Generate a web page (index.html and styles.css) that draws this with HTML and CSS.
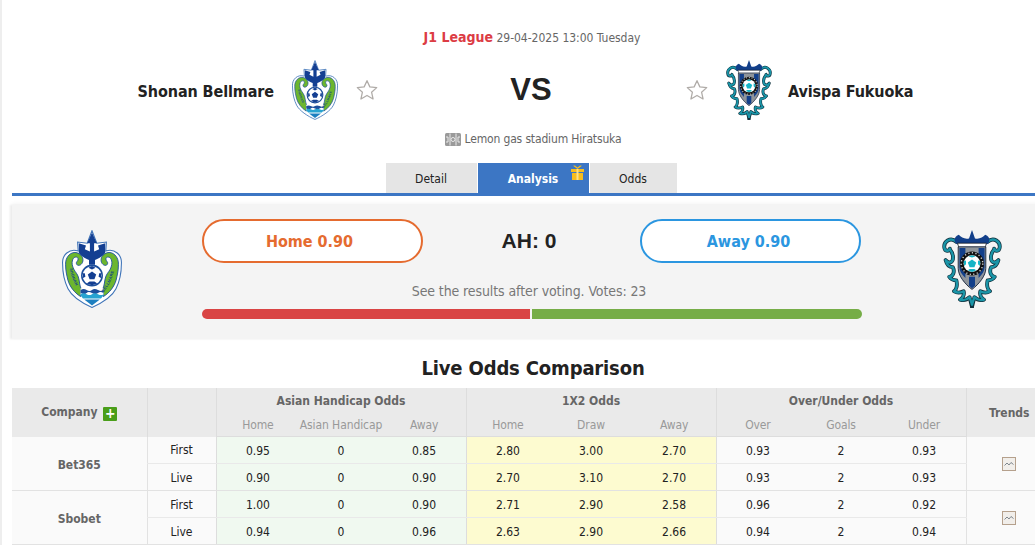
FILE: index.html
```html
<!DOCTYPE html>
<html lang="en">
<head>
<meta charset="utf-8">
<title>Shonan Bellmare vs Avispa Fukuoka</title>
<link rel="stylesheet" href="styles.css">
</head>
<body>
<svg class="defs" aria-hidden="true">
  <symbol id="shonan" viewBox="0 0 100 130">
    <path d="M50 1 58 22 74 20 73 35C88 30 100 42 99 56 99 74 95 88 90 98 84 110 66 122 50 129 34 122 16 110 10 98 5 88 1 74 1 56 0 42 12 30 27 35L26 20 42 22Z" fill="#fff" stroke="#3f74b8" stroke-width="1.800"/>
    <path d="M6 58C5 44 16 35 25 38 35 41 37 51 33 56 30 60 25 60 24 56 23 53 27 52 27 48 26 44 20 44 18 49 15 56 18 64 24 72 30 80 28 90 32 98L31 111C20 104 13 94 10 84 8 76 6 68 6 58Z" fill="#6cb62e" stroke="#1d4f9c" stroke-width="1.500"/>
    <path d="M94 58C95 44 84 35 75 38 65 41 63 51 67 56 70 60 75 60 76 56 77 53 73 52 73 48 74 44 80 44 82 49 85 56 82 64 76 72 70 80 72 90 68 98L69 111C80 104 87 94 90 84 92 76 94 68 94 58Z" fill="#6cb62e" stroke="#1d4f9c" stroke-width="1.500"/>
    <path d="M50 4 58 22H53.500V36L62 32 60 26 72 22V38C68 44 60 48 55 50V58H45V50C40 48 32 44 28 38V22L40 26 38 32 46.500 36V22H42Z" fill="#143f92"/>
    <circle cx="50" cy="76" r="17" fill="#fff" stroke="#1d4f9c" stroke-width="2.600"/>
    <path d="M50 69 57 74 54 82H46L43 74Z" fill="#143f92"/>
    <path d="M50 60 56 63 50 66 44 63ZM65 72 65 80 61 78 62 72ZM35 72 35 80 39 78 38 72ZM41 89 46 86H54L59 89 50 92Z" fill="#143f92"/>
    <path d="M31 97H69V108C63 116 56 122 50 126 44 122 37 116 31 108Z" fill="#fff"/>
    <path d="M31 100Q36 97 41 100T50 100 60 100 69 100V105Q64 102 60 105T50 105 41 105 31 105Z" fill="#1d4f9c"/>
    <path d="M31 107Q36 104 41 107T50 107 60 107 69 107V109L65 114H35L31 109Z" fill="#27a3d1"/>
    <path d="M37 116H63L50 126Z" fill="#1d7fc0"/>
    <path id="shonanL" d="M13 64C15 78 21 92 31 104" fill="none"/>
    <path id="shonanR" d="M69 104C79 92 85 78 87 64" fill="none"/>
    <text class="crest-text"><textPath href="#shonanL">SHONAN</textPath></text>
    <text class="crest-text"><textPath href="#shonanR">BELLMARE</textPath></text>
  </symbol>
  <symbol id="avispa" viewBox="0 0 100 130">
    <path class="scroll-under" d="M24 20C14 10 2 20 4 30 5 36 12 36 13 31M13 32C20 40 20 52 14 54 10 55 8 52 6 50 8 58 12 62 18 62 22 70 18 78 12 78 16 84 20 84 24 84 26 92 24 100 20 102 26 106 32 104 36 102 38 108 34 114 30 116 36 118 42 116 46 112L50 128"/>
    <path class="scroll-under" d="M76 20C86 10 98 20 96 30 95 36 88 36 87 31M87 32C80 40 80 52 86 54 90 55 92 52 94 50 92 58 88 62 82 62 78 70 82 78 88 78 84 84 80 84 76 84 74 92 76 100 80 102 74 106 68 104 64 102 62 108 66 114 70 116 64 118 58 116 54 112L50 128"/>
    <path class="scroll-top" d="M24 20C14 10 2 20 4 30 5 36 12 36 13 31M13 32C20 40 20 52 14 54 10 55 8 52 6 50 8 58 12 62 18 62 22 70 18 78 12 78 16 84 20 84 24 84 26 92 24 100 20 102 26 106 32 104 36 102 38 108 34 114 30 116 36 118 42 116 46 112L50 124"/>
    <path class="scroll-top" d="M76 20C86 10 98 20 96 30 95 36 88 36 87 31M87 32C80 40 80 52 86 54 90 55 92 52 94 50 92 58 88 62 82 62 78 70 82 78 88 78 84 84 80 84 76 84 74 92 76 100 80 102 74 106 68 104 64 102 62 108 66 114 70 116 64 118 58 116 54 112L50 124"/>
    <path d="M50 0 55 14C62 16 68 12 72 8 82 12 80 22 74 24H26C20 22 18 12 28 8 32 12 38 16 45 14Z" fill="#123f8a"/>
    <path d="M26 22H74L72 29H28Z" fill="#fff" stroke="#1a1a1a" stroke-width="1.200"/>
    <path d="M27 28H73V64C73 76 62 90 50 99 38 90 27 76 27 64Z" fill="#8f959b" stroke="#14213a" stroke-width="1.500"/>
    <path d="M29 30H39V80C33 74 29 68 29 62ZM71 30H61V80C67 74 71 68 71 62ZM45 78H55V93L50 97 45 93Z" fill="#123f8a"/>
    <circle cx="50" cy="56" r="20" fill="#111"/>
    <circle cx="50" cy="56" r="18" fill="none" stroke="#d8d8d8" stroke-width="2.400" stroke-dasharray="2 4"/>
    <circle cx="50" cy="56" r="14" fill="#fff"/>
    <path d="M50 49 57 54 54 62H46L43 54Z" fill="#17b4c6"/>
    <path d="M50 42 56 44 50 46 44 44ZM64 52 63 60 60 57 60 51ZM36 52 37 60 40 57 40 51ZM43 67 46 65H54L57 67 50 70Z" fill="#17b4c6"/>
  </symbol>
  <symbol id="star" viewBox="0 0 24 24">
    <path d="M12 1.800 15.100 8.600 22.600 9.400 17 14.400 18.600 21.800 12 18 5.400 21.800 7 14.400 1.400 9.400 8.900 8.600Z" fill="#fff" stroke="#b0aca8" stroke-width="1.400" stroke-linejoin="round"/>
  </symbol>
  <symbol id="trend" viewBox="0 0 14 14">
    <rect x=".5" y=".5" width="13" height="13" fill="#f1eeea" stroke="#b5a08c"/>
    <path d="M2.500 8.500 5 6 7 8 9 5.500 11.500 7.500" fill="none" stroke="#7f878e"/>
  </symbol>
</svg>

<div class="page">
  <header class="match">
    <div class="meta"><span class="league">J1 League</span> <span class="kick">29-04-2025 13:00 Tuesday</span></div>
    <div class="teams">
      <div class="side side-home">
        <span class="team">Shonan Bellmare</span>
        <svg class="crest-small"><use href="#shonan"/></svg>
        <svg class="fav"><use href="#star"/></svg>
      </div>
      <div class="vs">VS</div>
      <div class="side side-away">
        <svg class="fav"><use href="#star"/></svg>
        <svg class="crest-small"><use href="#avispa"/></svg>
        <span class="team">Avispa Fukuoka</span>
      </div>
    </div>
    <div class="venue">
      <svg class="venue-icon" viewBox="0 0 16 13"><rect width="16" height="13" rx="1.500" fill="#9a9a9a"/><path d="M5 .5V12.500M11 .5V12.500M1 4H3V9H1M15 4H13V9H15" fill="none" stroke="#e9e9e9"/><circle cx="8" cy="6.500" r="2" fill="none" stroke="#e9e9e9"/></svg>
      <span>Lemon gas stadium Hiratsuka</span>
    </div>
    <nav class="tabs">
      <a class="tab tab-detail">Detail</a>
      <a class="tab tab-active">Analysis
        <svg class="gift" viewBox="0 0 15 15"><path d="M1 4H14V7H1ZM2 8H13V15H2Z" fill="#f7bd1d"/><path d="M6.500 4V15H8.500V4Z" fill="#fbe08a"/><path d="M7.500 4 3 .8 5 .4 7.500 2.500 10 .4 12 .8Z" fill="#f7bd1d"/></svg>
      </a>
      <a class="tab tab-odds">Odds</a>
    </nav>
  </header>

  <section class="vote">
    <svg class="crest-big"><use href="#shonan"/></svg>
    <div class="vote-main">
      <div class="vote-row">
        <button class="pick pick-home">Home 0.90</button>
        <div class="ah">AH: 0</div>
        <button class="pick pick-away">Away 0.90</button>
      </div>
      <p class="vote-note">See the results after voting. Votes: 23</p>
      <div class="bar"><span class="bar-red"></span><span class="bar-green"></span></div>
    </div>
    <svg class="crest-big"><use href="#avispa"/></svg>
  </section>

  <h2 class="title">Live Odds Comparison</h2>

  <table class="odds">
    <colgroup>
      <col class="c-company"><col class="c-stage">
      <col class="c-odd"><col class="c-odd"><col class="c-odd">
      <col class="c-odd"><col class="c-odd"><col class="c-odd">
      <col class="c-odd"><col class="c-odd"><col class="c-odd">
      <col class="c-trend">
    </colgroup>
    <thead>
      <tr class="head-top">
        <th class="head-span" rowspan="2">Company <span class="plus">+</span></th>
        <th rowspan="2"></th>
        <th colspan="3">Asian Handicap Odds</th>
        <th colspan="3">1X2 Odds</th>
        <th colspan="3">Over/Under Odds</th>
        <th class="head-span" rowspan="2">Trends</th>
      </tr>
      <tr class="head-sub">
        <td class="gl">Home</td><td>Asian Handicap</td><td>Away</td>
        <td class="gl">Home</td><td>Draw</td><td>Away</td>
        <td class="gl">Over</td><td>Goals</td><td>Under</td>
      </tr>
    </thead>
    <tbody>
      <tr class="first">
        <td class="company" rowspan="2">Bet365</td><td class="stage">First</td>
        <td class="ah-cell gl">0.95</td><td class="ah-cell">0</td><td class="ah-cell">0.85</td>
        <td class="x-cell gl">2.80</td><td class="x-cell">3.00</td><td class="x-cell">2.70</td>
        <td class="ou gl">0.93</td><td class="ou">2</td><td class="ou">0.93</td>
        <td class="trend" rowspan="2"><svg class="trend-icon"><use href="#trend"/></svg></td>
      </tr>
      <tr class="last">
        <td class="stage">Live</td>
        <td class="ah-cell gl">0.90</td><td class="ah-cell">0</td><td class="ah-cell">0.90</td>
        <td class="x-cell gl">2.70</td><td class="x-cell">3.10</td><td class="x-cell">2.70</td>
        <td class="ou gl">0.93</td><td class="ou">2</td><td class="ou">0.93</td>
      </tr>
      <tr class="first">
        <td class="company" rowspan="2">Sbobet</td><td class="stage">First</td>
        <td class="ah-cell gl">1.00</td><td class="ah-cell">0</td><td class="ah-cell">0.90</td>
        <td class="x-cell gl">2.71</td><td class="x-cell">2.90</td><td class="x-cell">2.58</td>
        <td class="ou gl">0.96</td><td class="ou">2</td><td class="ou">0.92</td>
        <td class="trend" rowspan="2"><svg class="trend-icon"><use href="#trend"/></svg></td>
      </tr>
      <tr class="last">
        <td class="stage">Live</td>
        <td class="ah-cell gl">0.94</td><td class="ah-cell">0</td><td class="ah-cell">0.96</td>
        <td class="x-cell gl">2.63</td><td class="x-cell">2.90</td><td class="x-cell">2.66</td>
        <td class="ou gl">0.94</td><td class="ou">2</td><td class="ou">0.94</td>
      </tr>
    </tbody>
  </table>
</div>
</body>
</html>
```
FILE: styles.css
```css
html, body {
  margin: 0;
  height: 545px;
  overflow: hidden;
  background: #fff;
}
body {
  border-left: 2px solid #eee;
  font-family: "DejaVu Sans", "Noto Sans", sans-serif;
  font-stretch: condensed;
  font-size: 12px;
  color: #222;
}
.defs { display: none; }
.crest-text {
  font: bold 6.500px "Liberation Sans", sans-serif;
  fill: #123f8a;
  letter-spacing: .5px;
}
.scroll-under {
  fill: none;
  stroke: #10303c;
  stroke-width: 6.400;
  stroke-linejoin: round;
  stroke-linecap: round;
}
.scroll-top {
  fill: none;
  stroke: #1a95a8;
  stroke-width: 4;
  stroke-linejoin: round;
  stroke-linecap: round;
}
.page {
  width: 1042px;
  padding-left: 10px;
}

/* Match header */
.match { display: flex; flex-direction: column; }
.meta {
  margin-top: 28px;
  height: 18px;
  line-height: 18px;
  padding-right: 2px;
  text-align: center;
  color: #666;
}
.league { font-size: 14px; font-weight: bold; color: #dc3c44; }
.kick { letter-spacing: -.02px; }
.teams {
  display: grid;
  grid-template-columns: 366px 306px 1fr;
  margin-top: 14px;
  height: 60px;
}
.side { display: flex; align-items: center; gap: 18px; }
.side-home { justify-content: flex-end; }
.side-away { padding-left: 2px; }
.side-away .team { margin-left: -2px; }
.team { font-size: 16px; font-weight: bold; color: #222; padding-top: 2px; letter-spacing: -.1px; }
.crest-small { width: 46px; height: 60px; }
.fav { width: 22px; height: 22px; }
.vs {
  font: bold 31px/60px "Liberation Sans", sans-serif;
  text-align: center;
  color: #222;
}
.venue {
  display: flex;
  justify-content: center;
  align-items: center;
  gap: 4px;
  margin-top: 9px;
  height: 18px;
  padding-top: 1px;
  margin-bottom: -1px;
  letter-spacing: -.15px;
  color: #666;
}
.venue-icon { width: 16px; height: 13px; }
.tabs {
  display: flex;
  justify-content: center;
  align-items: flex-start;
  gap: 1px;
  margin-top: 16px;
  height: 30px;
  padding-right: 4px;
  border-bottom: 3px solid #3c76c4;
}
.tab {
  display: block;
  position: relative;
  height: 30px;
  line-height: 32px;
  text-align: center;
  background: #e5e5e5;
  color: #222;
}
.tab-detail { width: 91px; }
.tab-odds { width: 87px; }
.tab-active {
  width: 111px;
  height: 33px;
  background: #3c76c4;
  color: #fff;
  font-weight: bold;
}
.gift {
  position: absolute;
  top: 2px;
  right: 4px;
  width: 15px;
  height: 15px;
}

/* Vote panel */
.vote {
  display: flex;
  align-items: center;
  gap: 80px;
  margin-top: 9px;
  height: 134px;
  padding-left: 50px;
  background: #f4f4f4;
  box-shadow: -2px 0 2px #ececec, 0 -2px 4px #f6f6f6;
}
.crest-big { width: 60px; height: 78px; margin-top: -6px; }
.vote-main {
  width: 660px;
  display: flex;
  flex-direction: column;
  align-self: flex-start;
  padding-top: 14px;
}
.vote-row {
  display: flex;
  justify-content: space-between;
  align-items: center;
  padding-right: 1px;
}
.pick {
  width: 221px;
  height: 44px;
  border-radius: 22px;
  border: 2px solid;
  background: #fff;
  font-family: inherit;
  font-stretch: condensed;
  font-size: 16px;
  font-weight: bold;
}
.pick-home { border-color: #e56b2f; color: #e56b2f; padding: 0 6px 0 0; }
.pick-away { border-color: #2b96e0; color: #2b96e0; padding: 0 4px 0 0; }
.ah { font: bold 21px "Liberation Sans", sans-serif; color: #222; margin-right: 5px; }
.vote-note {
  margin: 19px 0 9px;
  padding-right: 6px;
  height: 18px;
  line-height: 18px;
  text-align: center;
  font-size: 14px;
  letter-spacing: -.1px;
  color: #777;
}
.bar { display: flex; gap: 2px; height: 10px; }
.bar-red { width: 328px; background: #d94444; border-radius: 5px 0 0 5px; }
.bar-green { flex: 1; background: #76ad47; border-radius: 0 5px 5px 0; }

/* Odds table */
.title {
  margin: 15px 0 6px;
  height: 28px;
  line-height: 28px;
  text-align: center;
  font-size: 20px;
  font-weight: bold;
  letter-spacing: -.15px;
  color: #222;
}
.odds {
  width: 1040px;
  table-layout: fixed;
  border-collapse: collapse;
  text-align: center;
  white-space: nowrap;
}
.c-company { width: 135px; }
.c-stage { width: 69px; }
.c-odd { width: 83.330px; }
.c-trend { width: 86px; }
.odds th, .odds td { padding: 1px 0 0; }
.head-top th {
  height: 23px;
  background: #eaeaea;
  color: #666;
  font-size: 12px;
  font-weight: bold;
  border-left: 1px solid #ddd;
}
.head-top th:first-child { border-left: 0; }
.odds .head-span { padding-top: 2px; }
.head-sub td {
  height: 23px;
  background: #eaeaea;
  color: #999;
  letter-spacing: -.1px;
  border-bottom: 1px solid #ddd;
}
.odds .gl { border-left: 1px solid #ddd; }
.first td, .last td { height: 25px; }
.first td { border-bottom: 1px solid #e9e9e9; }
.last td { border-bottom: 1px solid #e2e2e2; }
.odds td.company, .odds td.trend { border-bottom: 1px solid #e2e2e2; }
.odds td.company {
  padding-top: 3px;
  background: #fafafa;
  color: #666;
  font-size: 12px;
  font-weight: bold;
}
.stage { background: #fafafa; border-left: 1px solid #e2e2e2; color: #222; }
.ah-cell { background: #f0f9f0; }
.x-cell { background: #fdfbd0; }
.ou { background: #fafafa; }
.trend { background: #fafafa; border-left: 1px solid #e2e2e2; }
.trend-icon { display: block; width: 14px; height: 14px; margin: 0 auto; }
.plus {
  display: inline-block;
  width: 14px;
  height: 14px;
  line-height: 13px;
  margin-left: 2px;
  border-radius: 1px;
  background: #4a9e1a;
  color: #fff;
  font-size: 14px;
  font-weight: bold;
  vertical-align: -2px;
}
```
